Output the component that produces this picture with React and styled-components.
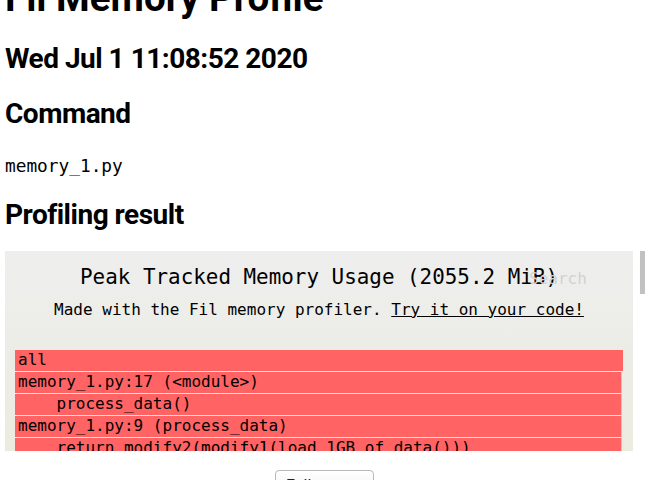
import React from 'react';
import styled, { createGlobalStyle } from 'styled-components';

const GlobalStyle = createGlobalStyle`
  html, body {
    margin: 0;
    padding: 0;
    background: #ffffff;
    overflow: hidden;
  }
  body {
    font-family: Roboto, "Liberation Sans", sans-serif;
    color: #000;
  }
`;

// the flamegraph rows, as the profiler writes them
const frames = [
  { text: 'all', width: 608 },
  { text: 'memory_1.py:17 (<module>)', width: 606 },
  { text: '    process_data()', width: 606 },
  { text: 'memory_1.py:9 (process_data)', width: 606 },
  { text: '    return modify2(modify1(load_1GB_of_data()))', width: 606 },
  { text: 'memory_1.py:13 (load_1GB_of_data)', width: 606 },
];

const App = () => {
  return (
    <>
      <GlobalStyle />
      <Page>
        <Title>Fil Memory Profile</Title>
        <Heading $top={22}>Wed Jul 1 11:08:52 2020</Heading>
        <Heading $top={21}>Command</Heading>
        <CommandText>memory_1.py</CommandText>
        <Heading $top={21}>Profiling result</Heading>

        <FrameView>
          <FlameCanvas>
            <FlameTitle>Peak Tracked Memory Usage (2055.2 MiB)</FlameTitle>
            <SearchLabel>Search</SearchLabel>
            <Subtitle>
              Made with the Fil memory profiler. <a href="#">Try it on your code!</a>
            </Subtitle>
            <FrameStack>
              {frames.map((f, i) => (
                <Frame key={i} $width={f.width} $edge={i > 0}>{f.text}</Frame>
              ))}
            </FrameStack>
          </FlameCanvas>
          <ScrollTrack>
            <ScrollThumb />
          </ScrollTrack>
        </FrameView>

        <ButtonRow>
          <FullScreenButton>Full screen</FullScreenButton>
        </ButtonRow>
      </Page>
    </>
  );
};

export default App;

const Page = styled.div`
  padding: 0 10px 0 5px;
  height: 480px;
  overflow: hidden;
`;

const Title = styled.h1`
  margin: -24px 0 0;
  font-size: 38.5px;
  line-height: 44px;
  font-weight: 700;
  letter-spacing: 0px;
`;

const Heading = styled.h2`
  margin: ${props => props.$top}px 0 0;
  font-size: 28px;
  line-height: 34px;
  font-weight: 700;
  letter-spacing: -0.5px;
`;

const CommandText = styled.p`
  margin: 24px 0 0;
  font-family: "DejaVu Sans Mono", "Liberation Mono", monospace;
  font-size: 17.8px;
  line-height: 22px;
`;

const FrameView = styled.div`
  margin-top: 19px;
  display: flex;
  height: 200px;
  width: 643px;
`;

const FlameCanvas = styled.div`
  position: relative;
  width: 628px;
  height: 200px;
  overflow: hidden;
  background: linear-gradient(#eeeeee, #ebebe0);
  font-family: "DejaVu Sans Mono", "Liberation Mono", monospace;
`;

const FlameTitle = styled.div`
  margin-top: 12px;
  text-align: center;
  font-size: 20.9px;
  line-height: 28px;
`;

const SearchLabel = styled.div`
  position: absolute;
  top: 20px;
  left: 524px;
  font-size: 16px;
  line-height: 16px;
  color: #d2d2d2;
`;

const Subtitle = styled.div`
  margin-top: 9px;
  text-align: center;
  font-size: 16px;
  line-height: 20px;

  a {
    color: #000;
    text-decoration: underline;
  }
`;

const FrameStack = styled.div`
  margin: 30px 0 0 10px;
  display: flex;
  flex-direction: column;
  gap: 1px;
`;

const Frame = styled.div`
  width: ${props => props.$width}px;
  height: 21px;
  flex: none;
  box-sizing: border-box;
  padding-left: 3px;
  background: #ff6363;
  box-shadow: ${props => (props.$edge ? '1px 0 0 #f8b4ae' : 'none')};
  font-size: 16px;
  line-height: 20px;
  white-space: pre;
  overflow: hidden;
  color: #000;
`;

const ScrollTrack = styled.div`
  width: 15px;
  height: 200px;
  background: #ffffff;
  display: flex;
  justify-content: flex-end;
  padding-right: 3px;
  box-sizing: border-box;
`;

const ScrollThumb = styled.div`
  width: 5px;
  height: 43px;
  background: #c1c1c1;
`;

const ButtonRow = styled.div`
  display: flex;
  justify-content: center;
  margin-top: 19px;
`;

const FullScreenButton = styled.button`
  width: 99px;
  height: 30px;
  margin-left: -4px;
  border: 1px solid #b9b9b9;
  border-radius: 4px;
  background: linear-gradient(#ffffff, #eeeeee);
  font-family: Roboto, "Liberation Sans", sans-serif;
  font-size: 16px;
  color: #222;
`;
